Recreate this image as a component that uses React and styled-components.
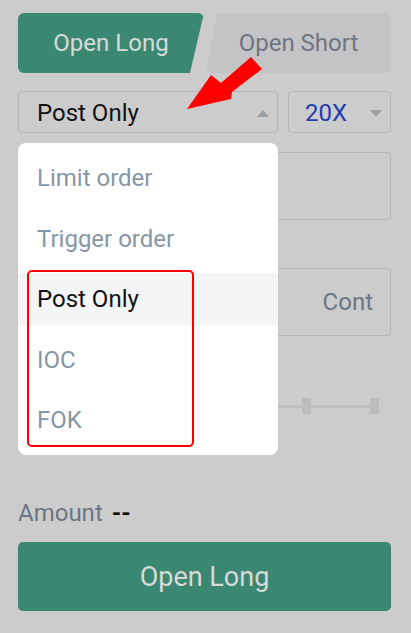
import React from "react";
import styled, { createGlobalStyle } from "styled-components";

const Global = createGlobalStyle`
  html, body {
    margin: 0;
    padding: 0;
    background: #cccccc;
    font-family: Roboto, "Noto Sans", sans-serif;
  }
`;

const orderTypes = ["Limit order", "Trigger order", "Post Only", "IOC", "FOK"];

export default function App() {
  return (
    <Page>
      <Global />
      <Tabs>
        <LongTab>Open Long</LongTab>
        <ShortTab>Open Short</ShortTab>
      </Tabs>

      <SelectRow>
        <Select>
          <SelectValue>Post Only</SelectValue>
          <Caret $up />
        </Select>
        <Leverage>
          <LeverageValue>20X</LeverageValue>
          <Caret />
        </Leverage>
      </SelectRow>

      <Field />
      <Field $gap={48}>
        <Unit>Cont</Unit>
      </Field>

      <Slider>
        {[0, 1, 2, 3, 4, 5].map((i) => (
          <Mark key={i} />
        ))}
      </Slider>

      <AmountRow>
        Amount<AmountValue>--</AmountValue>
      </AmountRow>
      <SubmitButton>Open Long</SubmitButton>

      <Menu>
        {orderTypes.map((t) => (
          <MenuItem key={t} $active={t === "Post Only"}>
            {t}
          </MenuItem>
        ))}
      </Menu>

      <Highlight />
      <Arrow viewBox="0 0 411 633">
        <polygon
          points="187,109 211,75 221,83 251,57 262,69 232,92 231,99"
          fill="#ff0000"
        />
      </Arrow>
    </Page>
  );
}

const Page = styled.div`
  position: relative;
  width: 411px;
  height: 633px;
  box-sizing: border-box;
  padding: 13px 20px 0 18px;
  overflow: hidden;
`;

const Tabs = styled.div`
  display: flex;
  height: 60px;
`;

const LongTab = styled.div`
  width: 186px;
  display: flex;
  align-items: center;
  justify-content: center;
  background: #3b8872;
  color: #d6dad8;
  font-size: 24px;
  border-radius: 6px;
  clip-path: polygon(0 0, 100% 0, calc(100% - 14px) 100%, 0 100%);
`;

const ShortTab = styled.div`
  flex: 1;
  margin-left: 2px;
  display: flex;
  align-items: center;
  justify-content: center;
  background: #c4c4c6;
  color: #6d7682;
  font-size: 24px;
  border-radius: 6px;
  clip-path: polygon(11px 0, 100% 0, 100% 100%, 0 100%);
`;

const SelectRow = styled.div`
  display: flex;
  gap: 10px;
  margin-top: 18px;
  height: 42px;
`;

const Box = styled.div`
  box-sizing: border-box;
  display: flex;
  align-items: center;
  border: 1px solid #b3b5b8;
  border-radius: 4px;
`;

const Select = styled(Box)`
  width: 260px;
  padding: 2px 8px 0 18px;
`;

const Leverage = styled(Box)`
  flex: 1;
  padding: 2px 8px 0 16px;
`;

const SelectValue = styled.span`
  flex: 1;
  font-size: 24px;
  color: #121212;
`;

const LeverageValue = styled.span`
  flex: 1;
  font-size: 24px;
  color: #1f40b0;
`;

const Caret = styled.span`
  width: 0;
  height: 0;
  border-left: 6px solid transparent;
  border-right: 6px solid transparent;
  ${(p) =>
    p.$up
      ? "border-bottom: 7px solid #9a9fa4;"
      : "border-top: 7px solid #9a9fa4;"}
`;

const Field = styled(Box)`
  height: 68px;
  margin-top: ${(p) => p.$gap || 19}px;
  justify-content: flex-end;
  padding-right: 17px;
`;

const Unit = styled.span`
  font-size: 24px;
  color: #6d7682;
`;

const Slider = styled.div`
  display: flex;
  justify-content: space-between;
  height: 16px;
  margin: 62px 12px 0 12px;
  background: linear-gradient(#bfbfc1, #bfbfc1) center / 100% 3px no-repeat;
`;

const Mark = styled.span`
  width: 9px;
  height: 16px;
  border-radius: 1px;
  background: #bcbcbe;
`;

const AmountRow = styled.div`
  margin-top: 86px;
  height: 26px;
  line-height: 26px;
  font-size: 24px;
  color: #6d7682;
`;

const AmountValue = styled.span`
  color: #111;
  font-weight: 700;
  margin-left: 9px;
`;

const SubmitButton = styled.div`
  margin-top: 16px;
  height: 69px;
  display: flex;
  align-items: center;
  justify-content: center;
  background: #3b8872;
  color: #d6dad8;
  font-size: 27px;
  border-radius: 5px;
`;

const Menu = styled.div`
  position: absolute;
  left: 18px;
  top: 143px;
  width: 260px;
  height: 312px;
  box-sizing: border-box;
  padding: 9px 0;
  display: flex;
  flex-direction: column;
  gap: 8.5px;
  background: #ffffff;
  border-radius: 8px;
`;

const MenuItem = styled.div`
  height: 52px;
  display: flex;
  align-items: center;
  padding-left: 19px;
  font-size: 24px;
  color: ${(p) => (p.$active ? "#111" : "#8696a6")};
  background: ${(p) => (p.$active ? "#f4f5f7" : "transparent")};
`;

const Highlight = styled.div`
  position: absolute;
  left: 27px;
  top: 270px;
  width: 167px;
  height: 177px;
  box-sizing: border-box;
  border: 2px solid #ff0000;
  border-radius: 5px;
`;

const Arrow = styled.svg`
  position: absolute;
  left: 0;
  top: 0;
  width: 411px;
  height: 633px;
  pointer-events: none;
`;
